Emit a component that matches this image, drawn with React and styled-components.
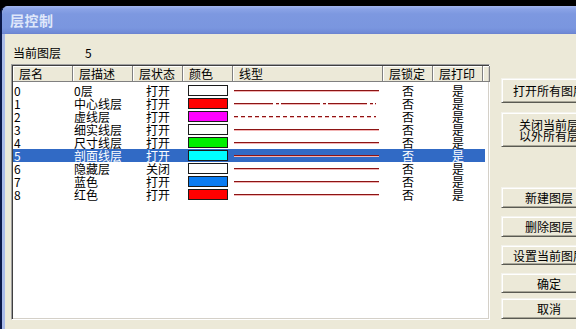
import React from "react";
import styled, { createGlobalStyle } from "styled-components";

const GlobalStyle = createGlobalStyle`
  html, body {
    margin: 0;
    padding: 0;
    background: #000;
    overflow: hidden;
  }
  * {
    box-sizing: border-box;
  }
`;

const columns = [
  { key: "name", title: "层名", width: 60 },
  { key: "desc", title: "层描述", width: 60 },
  { key: "state", title: "层状态", width: 50 },
  { key: "color", title: "颜色", width: 50 },
  { key: "line", title: "线型", width: 150 },
  { key: "lock", title: "层锁定", width: 50 },
  { key: "print", title: "层打印", width: 50 },
];

const layers = [
  { name: "0", desc: "0层", state: "打开", color: "#ffffff", line: "solid" },
  { name: "1", desc: "中心线层", state: "打开", color: "#ff0000", line: "dashdot" },
  { name: "2", desc: "虚线层", state: "打开", color: "#ff00ff", line: "dashed" },
  { name: "3", desc: "细实线层", state: "打开", color: "#ffffff", line: "solid" },
  { name: "4", desc: "尺寸线层", state: "打开", color: "#00f000", line: "solid" },
  { name: "5", desc: "剖面线层", state: "打开", color: "#00ffff", line: "solid" },
  { name: "6", desc: "隐藏层", state: "关闭", color: "#ffffff", line: "solid" },
  { name: "7", desc: "蓝色", state: "打开", color: "#0a7cf2", line: "solid" },
  { name: "8", desc: "红色", state: "打开", color: "#ff0000", line: "solid" },
];

const selectedIndex = 5;

const dashes = {
  solid: "none",
  dashdot: "39 3 3 2",
  dashed: "4 3",
};

// line type preview, dark red with the soft pink edge of the original
const LineSample = ({ type }) => {
  const end = type === "solid" ? 145 : 142;
  return (
    <svg width="146" height="4" viewBox="0 0 146 4">
      <line x1="0" y1="1.5" x2={end} y2="1.5" stroke="#8c1414" strokeWidth="1" strokeDasharray={dashes[type]} />
      <line x1="0" y1="2.5" x2={end} y2="2.5" stroke="#f2b4b4" strokeWidth="1" strokeDasharray={dashes[type]} />
    </svg>
  );
};

const App = () => {
  return (
    <Page>
      <GlobalStyle />
      <Window>
        <TitleBar>层控制</TitleBar>
        <Client>
          <LeftCol>
            <CurrentLayer>
              <span>当前图层</span>
              <CurrentValue>5</CurrentValue>
            </CurrentLayer>
            <ListBox>
              <Header>
                {columns.map((c) => (
                  <HeaderCell key={c.key} $w={c.width}>
                    {c.title}
                  </HeaderCell>
                ))}
                <HeaderFiller />
              </Header>
              <Rows>
                {layers.map((l, i) => (
                  <Row key={l.name} $selected={i === selectedIndex}>
                    <Cell $w={60} $pad={1}>{l.name}</Cell>
                    <Cell $w={60} $pad={1}>{l.desc}</Cell>
                    <Cell $w={50} $align="center">{l.state}</Cell>
                    <Cell $w={50} $align="center">
                      <Swatch $color={l.color} />
                    </Cell>
                    <Cell $w={150} $pad={1}>
                      <LineSample type={l.line} />
                    </Cell>
                    <Cell $w={50} $align="center">否</Cell>
                    <Cell $w={50} $align="center">是</Cell>
                  </Row>
                ))}
              </Rows>
            </ListBox>
          </LeftCol>
          <RightCol>
            <Button $h={25}>打开所有图层</Button>
            <Button $h={35} $mt={9}>
              <span>关闭当前层</span>
              <span>以外所有层</span>
            </Button>
            <Button $h={21} $mt={40}>新建图层</Button>
            <Button $h={21} $mt={8}>删除图层</Button>
            <Button $h={20} $mt={8}>设置当前图层</Button>
            <Button $h={20} $mt={8}>确定</Button>
            <Button $h={21} $mt={5}>取消</Button>
          </RightCol>
        </Client>
      </Window>
    </Page>
  );
};

const Page = styled.div`
  width: 576px;
  height: 329px;
  padding-top: 6px;
  background: #000;
  overflow: hidden;
  font-family: "Noto Sans CJK SC", "DejaVu Sans", sans-serif;
  font-size: 12px;
  color: #000;
`;

const Window = styled.div`
  width: 620px;
  height: 323px;
  display: flex;
  flex-direction: column;
  border-left: 2px solid #0b1848;
  border-top-left-radius: 8px;
  overflow: hidden;
  background: #ece9d8;
`;

const TitleBar = styled.div`
  height: 28px;
  flex: none;
  padding-left: 8px;
  display: flex;
  align-items: center;
  background: linear-gradient(
    to bottom,
    #a3b6ee 0px,
    #8aa3e6 3px,
    #7d98e0 8px,
    #7a96df 22px,
    #6f89d6 27px,
    #6a80cc 28px
  );
  color: #dfe7fa;
  font-size: 14px;
  font-weight: bold;
  letter-spacing: 0.5px;
`;

const Client = styled.div`
  flex: 1;
  display: flex;
  border-left: 3px solid #aabbe9;
  padding: 11px 0 0 6px;
`;

const LeftCol = styled.div`
  width: 479px;
  display: flex;
  flex-direction: column;
`;

const CurrentLayer = styled.div`
  height: 15px;
  line-height: 15px;
  padding-left: 2px;
  display: flex;
`;

const CurrentValue = styled.span`
  margin-left: 24px;
`;

const ListBox = styled.div`
  margin-top: 4px;
  height: 256px;
  background: #fff;
  border-top: 1px solid #a0a0a0;
  border-left: 1px solid #a0a0a0;
  border-right: 1px solid #ffffff;
  border-bottom: 1px solid #ffffff;
  box-shadow: inset 1px 1px 0 #404040, inset -1px -1px 0 #d4d0c8;
  padding: 1px;
  display: flex;
  flex-direction: column;
`;

const Header = styled.div`
  display: flex;
  height: 16px;
  flex: none;
  background: #ece9d8;
`;

const HeaderCell = styled.div`
  width: ${(p) => p.$w}px;
  flex: none;
  height: 16px;
  line-height: 16px;
  padding-left: 6px;
  border-right: 1px solid #808080;
  border-bottom: 1px solid #808080;
  box-shadow: inset 1px 1px 0 #ffffff;
  white-space: nowrap;
`;

const HeaderFiller = styled(HeaderCell)`
  flex: 1;
  width: auto;
`;

const Rows = styled.div`
  padding-top: 2px;
  display: flex;
  flex-direction: column;
`;

const Row = styled.div`
  display: flex;
  height: 13px;
  line-height: 13px;
  width: 472px;
  background: ${(p) => (p.$selected ? "#316ac5" : "transparent")};
  color: ${(p) => (p.$selected ? "#ffffff" : "#000000")};
`;

const Cell = styled.div`
  width: ${(p) => p.$w}px;
  flex: none;
  display: flex;
  align-items: center;
  justify-content: ${(p) => (p.$align === "center" ? "center" : "flex-start")};
  padding-left: ${(p) => p.$pad || 0}px;
  white-space: nowrap;
`;

const Swatch = styled.div`
  width: 40px;
  height: 11px;
  border: 1px solid #1a1a1a;
  background: ${(p) => p.$color};
`;

const RightCol = styled.div`
  margin-left: 11px;
  padding-top: 33px;
  display: flex;
  flex-direction: column;
`;

const Button = styled.div`
  width: 96px;
  height: ${(p) => p.$h}px;
  margin-top: ${(p) => p.$mt || 0}px;
  display: flex;
  flex-direction: column;
  align-items: center;
  justify-content: center;
  line-height: 11px;
  background: #ece9d8;
  border-top: 1px solid #f4f3ec;
  border-left: 1px solid #f4f3ec;
  border-bottom: 1px solid #5a5a52;
  border-right: 1px solid #5a5a52;
  box-shadow: inset 1px 1px 0 #ffffff, inset 0 -1px 0 #a8a698;
  white-space: nowrap;
`;

export default App;
